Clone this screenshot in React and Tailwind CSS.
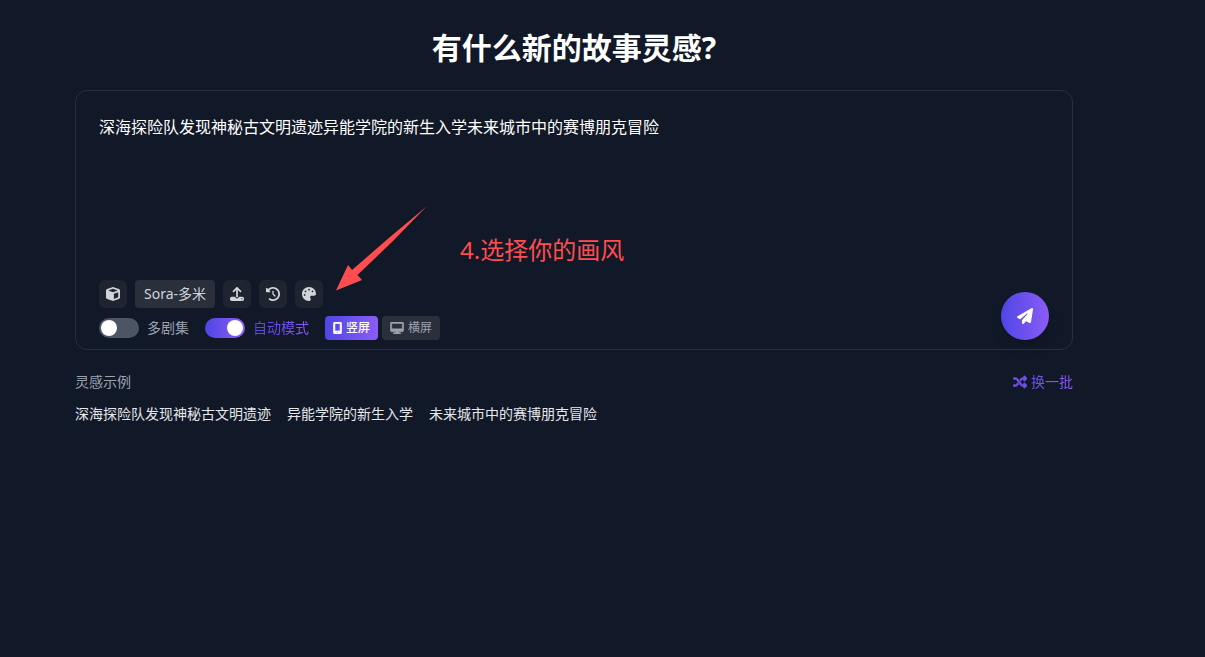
import { useState } from 'react'
import clsx from 'clsx'
import {
  FaClockRotateLeft,
  FaCube,
  FaDesktop,
  FaMobileScreenButton,
  FaPalette,
  FaPaperPlane,
  FaShuffle,
  FaUpload,
} from 'react-icons/fa6'

const EXAMPLES = [
  '深海探险队发现神秘古文明遗迹',
  '异能学院的新生入学',
  '未来城市中的赛博朋克冒险',
]

function IconButton({ label, children }) {
  return (
    <button
      type="button"
      aria-label={label}
      className="flex size-7 items-center justify-center rounded-md bg-[#1e2530] text-sm text-[#d1d5db]"
    >
      {children}
    </button>
  )
}

function Toggle({ label, checked, onChange }) {
  return (
    <label className="flex items-center gap-2 text-sm">
      <input
        type="checkbox"
        checked={checked}
        onChange={(e) => onChange(e.target.checked)}
        className="peer sr-only"
      />
      <span
        className={clsx(
          'flex h-5 w-10 items-center rounded-full px-0.5',
          checked ? 'justify-end bg-linear-to-r/srgb from-[#4f46e5] to-[#8b5cf6]' : 'bg-[#4b5563]',
        )}
      >
        <span className="size-4 rounded-full bg-white" />
      </span>
      <span
        className={
          checked
            ? 'bg-linear-to-r/srgb from-[#4f46e5] to-[#8b5cf6] bg-clip-text text-transparent'
            : 'text-[#9ca3af]'
        }
      >
        {label}
      </span>
    </label>
  )
}

function RatioButton({ active, onClick, children }) {
  return (
    <button
      type="button"
      aria-pressed={active}
      onClick={onClick}
      className={clsx(
        'flex h-6 items-center gap-1 rounded px-2 text-xs',
        active
          ? 'bg-linear-to-r/srgb from-[#4f46e5] to-[#8b5cf6] font-medium text-white'
          : 'bg-[#292f3b] text-[#9ca3af]',
      )}
    >
      {children}
    </button>
  )
}

function Annotation() {
  return (
    <div className="pointer-events-none absolute top-[115px] left-[259px] flex items-start gap-8 text-[#ff4d4f]">
      <svg width="93" height="86" viewBox="0 0 93 86" fill="currentColor" aria-hidden="true">
        <path d="M91.500 0.500L58 35L22.500 69L27 74L1 84.500L13 59L17 64L55 31Z" />
      </svg>
      <span className="mt-7 text-2xl">4.选择你的画风</span>
    </div>
  )
}

export default function App() {
  const [story, setStory] = useState(EXAMPLES.join(''))
  const [series, setSeries] = useState(false)
  const [auto, setAuto] = useState(true)
  const [ratio, setRatio] = useState('portrait')

  return (
    <main className="min-h-screen bg-[#111827] pt-7 pr-[132px] pl-[75px] font-['Noto_Sans','Noto_Sans_CJK_SC',sans-serif]">
      <h1 className="text-center text-3xl leading-10 font-bold text-white">有什么新的故事灵感?</h1>

      <section className="relative mt-[22px] rounded-xl border border-[#292f3d] px-[23px] pt-6 pb-[9px]">
        <textarea
          aria-label="故事灵感"
          value={story}
          onChange={(e) => setStory(e.target.value)}
          className="block h-[165px] w-full resize-none bg-transparent text-base leading-6 text-white outline-none"
        />
        <Annotation />

        <div className="flex items-end justify-between">
          <div className="flex flex-col gap-2">
            <div className="flex items-center gap-2">
              <IconButton label="模型">
                <FaCube />
              </IconButton>
              <button
                type="button"
                className="h-7 min-w-20 rounded bg-[#292f3b] px-2 text-sm text-[#d1d5db]"
              >
                Sora-多米
              </button>
              <IconButton label="上传">
                <FaUpload />
              </IconButton>
              <IconButton label="历史">
                <FaClockRotateLeft />
              </IconButton>
              <IconButton label="画风">
                <FaPalette />
              </IconButton>
            </div>
            <div className="flex items-center gap-4">
              <Toggle label="多剧集" checked={series} onChange={setSeries} />
              <Toggle label="自动模式" checked={auto} onChange={setAuto} />
              <div className="flex gap-1">
                <RatioButton active={ratio === 'portrait'} onClick={() => setRatio('portrait')}>
                  <FaMobileScreenButton className="h-3 w-[9px] stroke-current stroke-[30px]" />
                  竖屏
                </RatioButton>
                <RatioButton active={ratio === 'landscape'} onClick={() => setRatio('landscape')}>
                  <FaDesktop className="h-3 w-[14px] stroke-current stroke-[20px]" />
                  横屏
                </RatioButton>
              </div>
            </div>
          </div>

          <button
            type="button"
            aria-label="发送"
            className="flex size-12 items-center justify-center rounded-full bg-linear-to-r/srgb from-[#4f46e5] to-[#8b5cf6] text-base text-white shadow-lg"
          >
            <FaPaperPlane />
          </button>
        </div>
      </section>

      <div className="mt-[22px] flex items-center justify-between text-sm">
        <h2 className="text-[#9ca3af]">灵感示例</h2>
        <button type="button" className="flex items-center gap-1 text-[#7450ee]">
          <FaShuffle className="size-3.5 stroke-current stroke-[24px]" />
          <span className="bg-linear-to-r/srgb from-[#6a4fec] to-[#8b5cf6] bg-clip-text text-transparent">
            换一批
          </span>
        </button>
      </div>

      <div className="mt-3 flex flex-wrap gap-4 text-sm text-[#e5e7eb]">
        {EXAMPLES.map((text) => (
          <button key={text} type="button" onClick={() => setStory(text)}>
            {text}
          </button>
        ))}
      </div>
    </main>
  )
}
